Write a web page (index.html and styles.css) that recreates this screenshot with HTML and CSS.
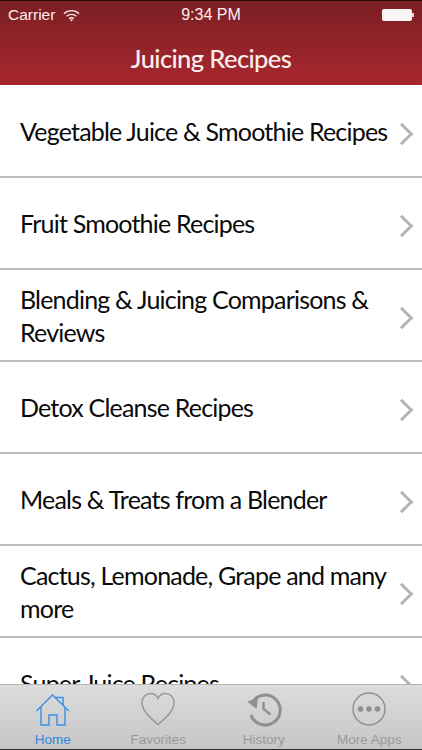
FILE: index.html
```html
<!DOCTYPE html>
<html lang="en">
<head>
    <meta charset="UTF-8">
    <meta name="viewport" content="width=device-width, initial-scale=1.0">
    <title>Juicing Recipes</title>
    <link rel="stylesheet" href="styles.css">
</head>
<body>
    <header class="app-header">
        <div class="status-bar">
            <div class="status-left">
                <span>Carrier</span>
                <svg class="wifi-icon" viewBox="0 0 18 13" width="17" height="13">
                    <path d="M1 4.600a11.500 11.500 0 0 1 16 0M3.800 7.400a7.500 7.500 0 0 1 10.400 0M6.400 10a3.800 3.800 0 0 1 5.200 0" fill="none" stroke="#f6e6e6" stroke-width="1.500"/>
                    <path d="M9 12.800l-1.500-1.600a2.100 2.100 0 0 1 3 0z" fill="#f6e6e6"/>
                </svg>
            </div>
            <div class="status-time">9:34 PM</div>
            <div class="status-right">
                <div class="battery"></div>
                <div class="battery-tip"></div>
            </div>
        </div>
        <h1>Juicing Recipes</h1>
    </header>
    <div class="recipe-list">
        <div class="recipe-row"><div class="recipe-name">Vegetable Juice &amp; Smoothie Recipes</div><div class="chevron"></div></div>
        <div class="recipe-row"><div class="recipe-name">Fruit Smoothie Recipes</div><div class="chevron"></div></div>
        <div class="recipe-row"><div class="recipe-name">Blending &amp; Juicing Comparisons &amp; Reviews</div><div class="chevron"></div></div>
        <div class="recipe-row"><div class="recipe-name">Detox Cleanse Recipes</div><div class="chevron"></div></div>
        <div class="recipe-row"><div class="recipe-name">Meals &amp; Treats from a Blender</div><div class="chevron"></div></div>
        <div class="recipe-row"><div class="recipe-name">Cactus, Lemonade, Grape and many more</div><div class="chevron"></div></div>
        <div class="recipe-row"><div class="recipe-name">Super Juice Recipes</div><div class="chevron"></div></div>
    </div>
    <nav class="tab-bar">
        <div class="tab-item active">
            <svg viewBox="0 0 36 36" width="36" height="36" fill="none" stroke="#3a8ee6" stroke-width="1.400">
                <path d="M1.500 20L17.500 4l16.500 16"/>
                <path d="M21 7.500V6.500h7V14.500"/>
                <path d="M6 16v18h8V24h8v10h8V16"/>
            </svg>
            <span>Home</span>
        </div>
        <div class="tab-item">
            <svg viewBox="0 0 36 36" width="36" height="36" fill="none" stroke="#979797" stroke-width="1.400">
                <path d="M18 33.500C10 26.500 2 20 2 11.500 2 6 6 2.500 10.500 2.500c3.500 0 6 1.800 7.500 5 1.500-3.200 4-5 7.500-5C30 2.500 34 6 34 11.500c0 8.500-8 15-16 22z"/>
            </svg>
            <span>Favorites</span>
        </div>
        <div class="tab-item">
            <svg viewBox="0 0 36 36" width="36" height="36" fill="none" stroke="#909090" stroke-width="3">
                <path d="M6.500 11A15 15 0 1 1 5 24"/>
                <path d="M1 10.500l9.500 7.500 1.500-11z" fill="#909090" stroke="none"/>
                <path d="M17.500 11v7l7 5.500" stroke-width="2.400"/>
            </svg>
            <span>History</span>
        </div>
        <div class="tab-item">
            <svg viewBox="0 0 36 36" width="36" height="36" fill="none" stroke="#8f8f8f" stroke-width="1.400">
                <circle cx="18" cy="18" r="16"/>
                <circle cx="9.500" cy="18" r="2.800" fill="#8f8f8f" stroke="none"/>
                <circle cx="18" cy="18" r="2.800" fill="#8f8f8f" stroke="none"/>
                <circle cx="26.500" cy="18" r="2.800" fill="#8f8f8f" stroke="none"/>
            </svg>
            <span>More Apps</span>
        </div>
    </nav>
</body>
</html>
```

FILE: styles.css
```css
* {
    box-sizing: border-box;
    margin: 0;
    padding: 0;
}
html, body {
    height: 100%;
}
body {
    font-family: Lato, sans-serif;
    background-color: white;
    color: #0a0a0a;
    height: 750px;
    overflow: hidden;
    display: flex;
    flex-direction: column;
    position: relative;
}
.app-header {
    height: 85px;
    flex: none;
    background: linear-gradient(#7a1f24, #a8272e);
    border-top: 1px solid #2a0a0b;
    color: #fbeeee;
}
.status-bar {
    display: grid;
    grid-template-columns: 1fr auto 1fr;
    align-items: center;
    height: 28px;
    padding: 0 8px;
    font-family: "Liberation Sans", sans-serif;
    font-size: 15.5px;
}
.status-left {
    display: flex;
    align-items: center;
    gap: 8px;
}
.status-right {
    display: flex;
    justify-content: flex-end;
    align-items: center;
}
.status-time {
    font-size: 16px;
}
.battery {
    width: 30px;
    height: 12px;
    background-color: #fbf4f4;
    border-radius: 2px;
}
.battery-tip {
    width: 2px;
    height: 4px;
    background-color: #e8d0d0;
}
.app-header h1 {
    text-align: center;
    font-size: 25.5px;
    font-weight: 500;
    line-height: 32px;
    margin-top: 13px;
    letter-spacing: -0.6px;
}
.recipe-list {
    flex: 1;
    overflow: hidden;
    padding-top: 1px;
}
.recipe-row {
    height: 92px;
    display: flex;
    align-items: center;
    justify-content: space-between;
    padding: 1px 12px 0 20px;
    border-bottom: 2px solid #bdbdbd;
}
.recipe-name {
    font-size: 25px;
    line-height: 33px;
    letter-spacing: -0.8px;
    max-width: 372px;
}
.chevron {
    width: 16px;
    height: 16px;
    flex: none;
    margin-top: 4px;
    border-top: 3px solid #b4b4b4;
    border-right: 3px solid #b4b4b4;
    transform: rotate(45deg);
}
.tab-bar {
    position: absolute;
    left: 0;
    right: 0;
    bottom: 0;
    height: 66px;
    display: grid;
    grid-template-columns: repeat(4, 1fr);
    background: linear-gradient(#dcdcdc, #c6c6c6);
    border-top: 1px solid #b5b5b5;
    border-bottom: 1px solid #2a2a2a;
    padding-top: 6px;
}
.tab-item {
    display: flex;
    flex-direction: column;
    align-items: center;
    font-family: "Liberation Sans", sans-serif;
    font-size: 13.5px;
    line-height: 15px;
    color: #9a9a9a;
    gap: 5px;
}
.tab-item.active {
    color: #2f86e2;
}
```
